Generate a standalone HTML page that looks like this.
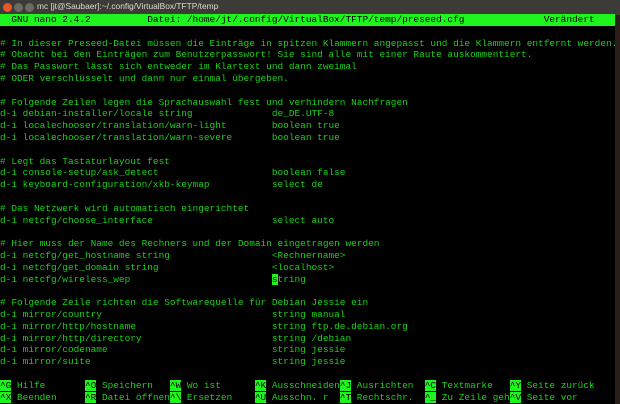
<!DOCTYPE html>
<html><head><meta charset="utf-8"><style>
html,body{margin:0;padding:0;background:#000;width:620px;height:404px;overflow:hidden}
#tb{position:absolute;left:0;top:0;width:620px;height:15px;background:#3c3b37;}
#tb .t{position:absolute;left:37px;top:1px;font:8.4px "Liberation Sans",sans-serif;color:#dfdbd2;white-space:pre}
.b{position:absolute;top:3px;width:9px;height:9px;border-radius:50%;background:#6b6a65}
#edge{position:absolute;left:615px;top:15px;width:5px;height:389px;background:#2a1f18}
pre{position:absolute;left:0;top:14px;margin:0;font:9.45px/11.8px "Liberation Mono",monospace;color:#19d119;white-space:pre}
.h{background:#1ef51e;color:#000;display:inline-block;width:615px}
.k{background:#1ef51e;color:#000}
</style></head><body>
<div id="tb"><div class="b" style="left:3px;background:#e8562d"></div><div class="b" style="left:14px"></div><div class="b" style="left:25px"></div><div class="t">mc [jt@Saubaer]:~/.config/VirtualBox/TFTP/temp</div></div>
<div id="edge"></div>
<pre><span class="h">  GNU nano 2.4.2          Datei: /home/jt/.config/VirtualBox/TFTP/temp/preseed.cfg              Verändert</span>

# In dieser Preseed-Datei müssen die Einträge in spitzen Klammern angepasst und die Klammern entfernt werden.
# Obacht bei den Einträgen zum Benutzerpasswort! Sie sind alle mit einer Raute auskommentiert.
# Das Passwort lässt sich entweder im Klartext und dann zweimal
# ODER verschlüsselt und dann nur einmal übergeben.

# Folgende Zeilen legen die Sprachauswahl fest und verhindern Nachfragen
d-i debian-installer/locale string              de_DE.UTF-8
d-i localechooser/translation/warn-light        boolean true
d-i localechooser/translation/warn-severe       boolean true

# Legt das Tastaturlayout fest
d-i console-setup/ask_detect                    boolean false
d-i keyboard-configuration/xkb-keymap           select de

# Das Netzwerk wird automatisch eingerichtet
d-i netcfg/choose_interface                     select auto

# Hier muss der Name des Rechners und der Domain eingetragen werden
d-i netcfg/get_hostname string                  &lt;Rechnername&gt;
d-i netcfg/get_domain string                    &lt;localhost&gt;
d-i netcfg/wireless_wep                         <span class="k">s</span>tring

# Folgende Zeile richten die Softwarequelle für Debian Jessie ein
d-i mirror/country                              string manual
d-i mirror/http/hostname                        string ftp.de.debian.org
d-i mirror/http/directory                       string /debian
d-i mirror/codename                             string jessie
d-i mirror/suite                                string jessie

<span class="k">^G</span> Hilfe       <span class="k">^O</span> Speichern   <span class="k">^W</span> Wo ist      <span class="k">^K</span> Ausschneiden<span class="k">^J</span> Ausrichten  <span class="k">^C</span> Textmarke   <span class="k">^Y</span> Seite zurück
<span class="k">^X</span> Beenden     <span class="k">^R</span> Datei öffnen<span class="k">^\</span> Ersetzen    <span class="k">^U</span> Ausschn. r  <span class="k">^T</span> Rechtschr.  <span class="k">^_</span> Zu Zeile geh<span class="k">^V</span> Seite vor</pre>
</body></html>
